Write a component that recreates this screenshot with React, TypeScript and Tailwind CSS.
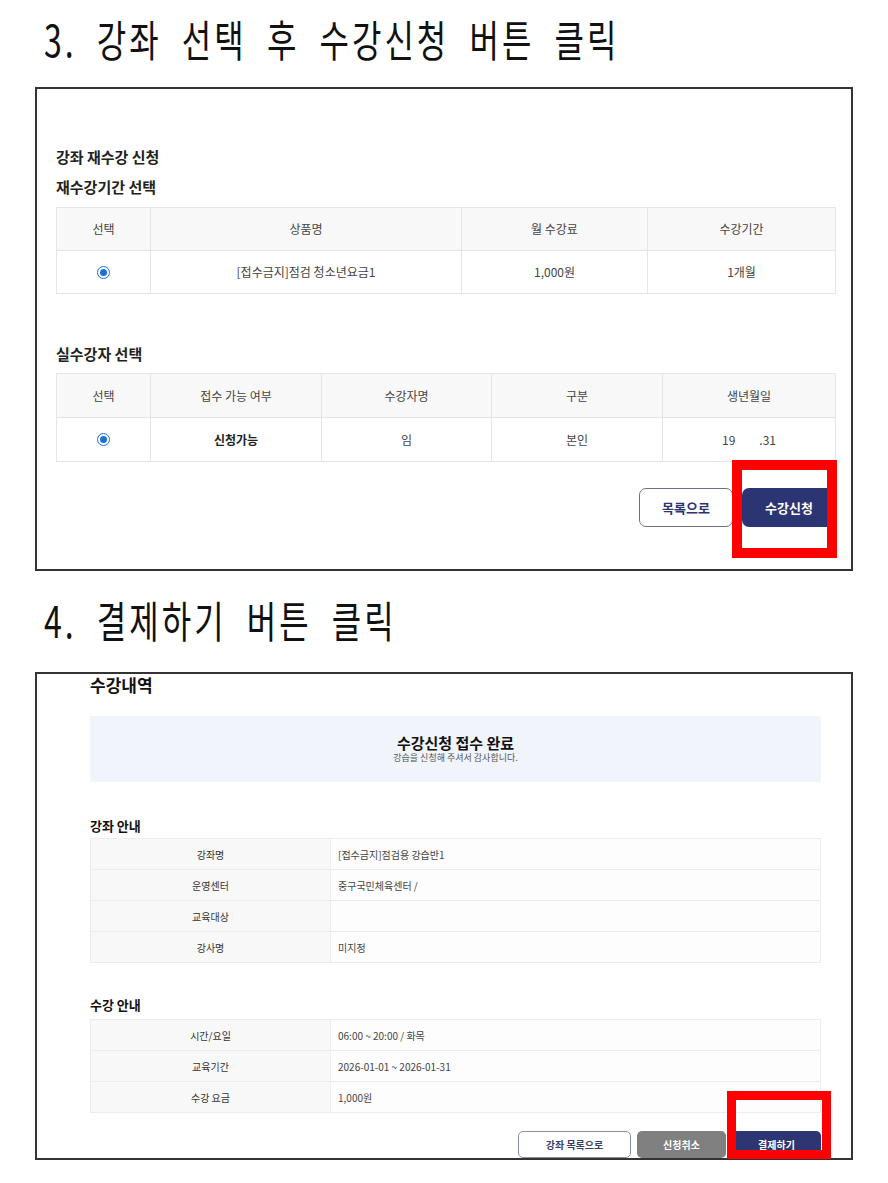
import React from "react";

const font = {
  fontFamily: '"Noto Sans CJK KR", "Noto Sans", sans-serif',
};

const Radio = () => (
  <span className="inline-flex w-[13px] h-[13px] rounded-full border-[1.5px] border-[#1b6fd9] bg-white items-center justify-center">
    <span className="w-[7px] h-[7px] rounded-full bg-[#1b6fd9]"></span>
  </span>
);

const Heading = ({ children }: { children: React.ReactNode }) => (
  <h1 className="text-[32px] font-normal text-[#111] leading-[40px] tracking-[3px] [word-spacing:10px] scale-y-[1.35] origin-center whitespace-nowrap">
    {children}
  </h1>
);

const InfoTable = ({ rows }: { rows: [string, string][] }) => (
  <div className="border-t border-l border-[#ececec]">
    {rows.map(([label, value]) => (
      <div key={label} className="grid grid-cols-[240px_1fr] border-b border-[#ececec]">
        <div className="h-[30px] flex items-center justify-center bg-[#f8f8f8] border-r border-[#ececec] text-[10px] text-[#333]">
          {label}
        </div>
        <div className="h-[30px] flex items-center pl-[7px] border-r border-[#ececec] text-[10px] text-[#444] bg-[#fdfdfd]">
          {value}
        </div>
      </div>
    ))}
  </div>
);

export default function App() {
  return (
    <div className="w-[888px] h-[1183px] bg-white relative" style={font}>
      {/* 3. heading */}
      <div className="h-[87px] pl-[44px] pt-[18px]">
        <Heading>3. 강좌 선택 후 수강신청 버튼 클릭</Heading>
      </div>

      {/* Box 1 */}
      <div className="ml-[35px] w-[818px] h-[484px] border-2 border-[#333] pl-[19px] pr-[15px] pt-[58px]">
        <div className="text-[15px] font-bold text-[#222] leading-[20px]">강좌 재수강 신청</div>
        <div className="mt-[10px] text-[15px] font-bold text-[#222] leading-[20px]">재수강기간 선택</div>

        <div className="mt-[10px] border-t border-l border-[#e5e5e5] text-[12px] text-[#444]">
          <div className="grid grid-cols-[94px_311px_186px_188px] bg-[#f8f8f8]">
            {["선택", "상품명", "월 수강료", "수강기간"].map((h) => (
              <div key={h} className="h-[43px] flex items-center justify-center border-r border-b border-[#e5e5e5]">
                {h}
              </div>
            ))}
          </div>
          <div className="grid grid-cols-[94px_311px_186px_188px]">
            <div className="h-[43px] flex items-center justify-center border-r border-b border-[#e5e5e5]">
              <Radio />
            </div>
            <div className="h-[43px] flex items-center justify-center border-r border-b border-[#e5e5e5]">
              [접수금지]점검 청소년요금1
            </div>
            <div className="h-[43px] flex items-center justify-center border-r border-b border-[#e5e5e5]">1,000원</div>
            <div className="h-[43px] flex items-center justify-center border-r border-b border-[#e5e5e5]">1개월</div>
          </div>
        </div>

        <div className="mt-[50px] text-[15px] font-bold text-[#222] leading-[20px]">실수강자 선택</div>

        <div className="mt-[9px] border-t border-l border-[#e5e5e5] text-[12px] text-[#444]">
          <div className="grid grid-cols-[94px_171px_170px_171px_173px] bg-[#f8f8f8]">
            {["선택", "접수 가능 여부", "수강자명", "구분", "생년월일"].map((h) => (
              <div key={h} className="h-[44px] flex items-center justify-center border-r border-b border-[#e5e5e5]">
                {h}
              </div>
            ))}
          </div>
          <div className="grid grid-cols-[94px_171px_170px_171px_173px]">
            <div className="h-[44px] flex items-center justify-center border-r border-b border-[#e5e5e5]">
              <Radio />
            </div>
            <div className="h-[44px] flex items-center justify-center border-r border-b border-[#e5e5e5] font-bold text-[#222]">
              신청가능
            </div>
            <div className="h-[44px] flex items-center justify-center border-r border-b border-[#e5e5e5]">임</div>
            <div className="h-[44px] flex items-center justify-center border-r border-b border-[#e5e5e5]">본인</div>
            <div className="h-[44px] flex items-center justify-center border-r border-b border-[#e5e5e5]">
              <span>19</span>
              <span className="inline-block w-[24px]"></span>
              <span>.31</span>
            </div>
          </div>
        </div>

        <div className="mt-[26px] flex justify-end gap-[9px]">
          <button className="w-[94px] h-[39px] rounded-[7px] border border-[#6e7186] bg-white text-[13px] font-bold text-[#2c3573]">
            목록으로
          </button>
          <button className="w-[94px] h-[39px] rounded-[7px] bg-[#2c3573] text-[13px] font-bold text-white">
            수강신청
          </button>
        </div>
      </div>

      {/* 4. heading */}
      <div className="h-[101px] pl-[44px] pt-[28px]">
        <Heading>4. 결제하기 버튼 클릭</Heading>
      </div>

      {/* Box 2 */}
      <div className="ml-[35px] w-[818px] h-[488px] border-2 border-[#333] pl-[53px] pr-[30px]">
        <div className="text-[17px] font-bold text-[#111] leading-[22px]">수강내역</div>

        <div className="mt-[20px] h-[66px] bg-[#f1f4fa] flex flex-col items-center justify-center">
          <div className="text-[15px] font-bold text-[#111] leading-[18px]">수강신청 접수 완료</div>
          <div className="text-[9px] text-[#555] leading-[12px]">강습을 신청해 주셔서 감사합니다.</div>
        </div>

        <div className="mt-[35px] text-[13px] font-bold text-[#111] leading-[18px]">강좌 안내</div>
        <div className="mt-[3px]">
          <InfoTable
            rows={[
              ["강좌명", "[접수금지]점검용 강습반1"],
              ["운영센터", "중구국민체육센터 /"],
              ["교육대상", ""],
              ["강사명", "미지정"],
            ]}
          />
        </div>

        <div className="mt-[33px] text-[13px] font-bold text-[#111] leading-[18px]">수강 안내</div>
        <div className="mt-[5px]">
          <InfoTable
            rows={[
              ["시간/요일", "06:00 ~ 20:00 / 화목"],
              ["교육기간", "2026-01-01 ~ 2026-01-31"],
              ["수강 요금", "1,000원"],
            ]}
          />
        </div>

        <div className="mt-[18px] flex justify-end gap-[6px]">
          <button className="w-[113px] h-[27px] rounded-[5px] border border-[#8a8fb0] bg-white text-[10px] font-bold text-[#3a3f6a]">
            강좌 목록으로
          </button>
          <button className="w-[89px] h-[27px] rounded-[5px] bg-[#808080] text-[10px] font-bold text-white">
            신청취소
          </button>
          <button className="w-[89px] h-[27px] rounded-[5px] bg-[#2d3673] text-[10px] font-bold text-white">
            결제하기
          </button>
        </div>
      </div>

      {/* red highlight annotations */}
      <div className="absolute left-[732px] top-[460px] w-[105px] h-[98px] border-[10px] border-[#ff0000]"></div>
      <div className="absolute left-[727px] top-[1091px] w-[104px] h-[68px] border-[9px] border-[#ff0000]"></div>
    </div>
  );
}
